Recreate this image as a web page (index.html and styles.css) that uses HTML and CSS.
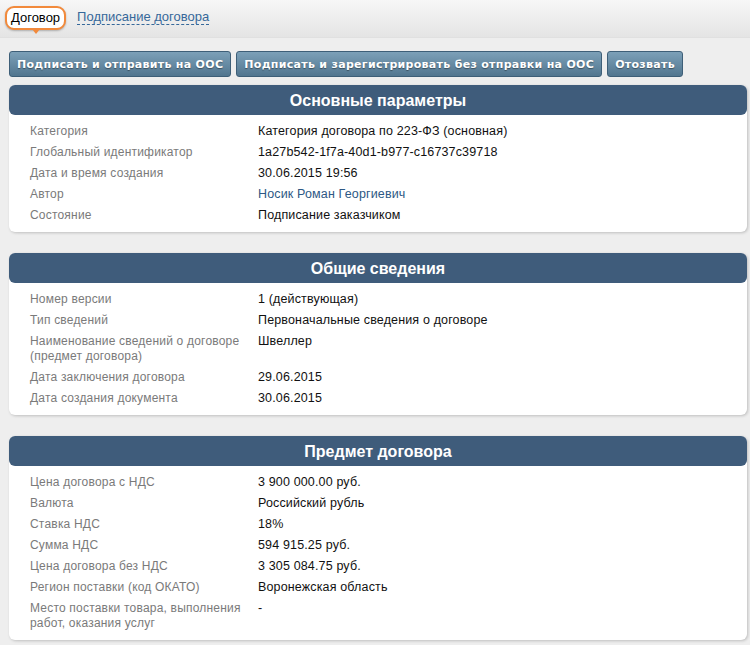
FILE: index.html
```html
<!DOCTYPE html>
<html lang="ru">
<head>
<meta charset="UTF-8">
<title>Договор</title>
<link rel="stylesheet" href="styles.css">
</head>
<body>

<div class="topbar">
  <span class="tab-active">Договор</span>
  <a href="#" class="tab-link">Подписание договора</a>
</div>

<div class="actions">
  <button class="btn">Подписать и отправить на ООС</button>
  <button class="btn">Подписать и зарегистрировать без отправки на ООС</button>
  <button class="btn">Отозвать</button>
</div>

<div class="panel">
  <div class="panel-title">Основные параметры</div>
  <div class="panel-body">
    <div class="row"><div class="label">Категория</div><div class="value">Категория договора по 223-ФЗ (основная)</div></div>
    <div class="row"><div class="label">Глобальный идентификатор</div><div class="value">1a27b542-1f7a-40d1-b977-c16737c39718</div></div>
    <div class="row"><div class="label">Дата и время создания</div><div class="value">30.06.2015 19:56</div></div>
    <div class="row"><div class="label">Автор</div><div class="value"><a href="#" class="author">Носик Роман Георгиевич</a></div></div>
    <div class="row"><div class="label">Состояние</div><div class="value">Подписание заказчиком</div></div>
  </div>
</div>

<div class="panel">
  <div class="panel-title">Общие сведения</div>
  <div class="panel-body">
    <div class="row"><div class="label">Номер версии</div><div class="value">1 (действующая)</div></div>
    <div class="row"><div class="label">Тип сведений</div><div class="value">Первоначальные сведения о договоре</div></div>
    <div class="row"><div class="label">Наименование сведений о договоре (предмет договора)</div><div class="value">Швеллер</div></div>
    <div class="row"><div class="label">Дата заключения договора</div><div class="value">29.06.2015</div></div>
    <div class="row"><div class="label">Дата создания документа</div><div class="value">30.06.2015</div></div>
  </div>
</div>

<div class="panel">
  <div class="panel-title">Предмет договора</div>
  <div class="panel-body">
    <div class="row"><div class="label">Цена договора с НДС</div><div class="value">3 900 000.00 руб.</div></div>
    <div class="row"><div class="label">Валюта</div><div class="value">Российский рубль</div></div>
    <div class="row"><div class="label">Ставка НДС</div><div class="value">18%</div></div>
    <div class="row"><div class="label">Сумма НДС</div><div class="value">594 915.25 руб.</div></div>
    <div class="row"><div class="label">Цена договора без НДС</div><div class="value">3 305 084.75 руб.</div></div>
    <div class="row"><div class="label">Регион поставки (код ОКАТО)</div><div class="value">Воронежская область</div></div>
    <div class="row"><div class="label">Место поставки товара, выполнения работ, оказания услуг</div><div class="value">-</div></div>
  </div>
</div>

</body>
</html>
```

FILE: styles.css
```css
body, html {
  margin: 0;
  padding: 0;
  background-color: #eeeeee;
  font-family: 'Liberation Sans', Arial, sans-serif;
  font-size: 12px;
  color: #000;
}

.topbar {
  height: 38px;
  display: flex;
  align-items: flex-start;
  padding: 6px 0 0 5px;
  box-sizing: border-box;
  background: linear-gradient(#f7f7f7, #e4e4e4);
  border-bottom: 1px solid #e0e0e0;
}

.tab-active {
  position: relative;
  display: inline-block;
  padding: 2px 4px 3px;
  border: 2px solid #f28a3c;
  border-radius: 9px;
  background-color: #fff;
  box-shadow: 0 1px 2px rgba(0,0,0,0.25);
  font-size: 13px;
}

.tab-active::after {
  content: '';
  position: absolute;
  left: 25px;
  bottom: -6px;
  width: 0;
  height: 0;
  border-left: 4px solid transparent;
  border-right: 4px solid transparent;
  border-top: 5px solid #f28a3c;
}

.tab-link {
  margin: 4px 0 0 11px;
  color: #36689a;
  text-decoration: none;
  font-size: 13px;
  border-bottom: 1px dashed #36689a;
  line-height: 14px;
}

.actions {
  display: flex;
  gap: 5px;
  padding: 13px 0 0 9px;
}

.btn {
  height: 26px;
  padding: 0 7px;
  border: 1px solid #3e5f78;
  border-radius: 3px;
  background: linear-gradient(#7ca0b8, #52768f);
  color: #fff;
  font-family: 'DejaVu Sans', Verdana, sans-serif;
  font-weight: bold;
  font-size: 11px;
  letter-spacing: 0.3px;
  text-shadow: 0 1px 1px rgba(0,0,0,0.4);
  cursor: pointer;
}

.panel {
  margin: 8px 3px 21px 9px;
  background-color: #fff;
  border-radius: 6px;
  box-shadow: 1px 1px 3px rgba(0,0,0,0.2);
}

.panel-title {
  height: 30px;
  line-height: 31px;
  background-color: #3f5c7b;
  border-radius: 6px;
  color: #fff;
  text-align: center;
  font-weight: bold;
  font-size: 16px;
}

.panel-body {
  padding: 6px 0 6px 21px;
}

.row {
  display: flex;
  padding: 3px 0;
  line-height: 15px;
}

.label {
  width: 228px;
  flex-shrink: 0;
  color: #7a7a7a;
  letter-spacing: 0.2px;
}

.value {
  color: #111;
  font-size: 12.5px;
  letter-spacing: 0.15px;
}

.author {
  color: #2d5884;
  text-decoration: none;
}
```
